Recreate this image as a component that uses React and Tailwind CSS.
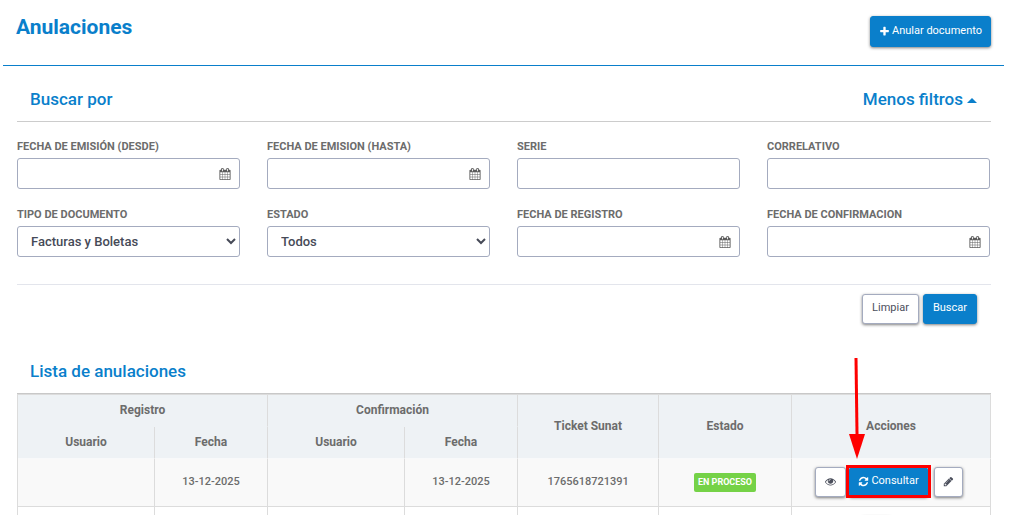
import React from "react";
import clsx from "clsx";

const ICONS = {
  plus: "M1600 736v192q0 40-28 68t-68 28h-416v416q0 40-28 68t-68 28h-192q-40 0-68-28t-28-68v-416h-416q-40 0-68-28t-28-68v-192q0-40 28-68t68-28h416v-416q0-40 28-68t68-28h192q40 0 68 28t28 68v416h416q40 0 68 28t28 68z",
  calendar:
    "M192 1664h288v-288h-288v288zm352 0h320v-288h-320v288zm-352-352h288v-320h-288v320zm352 0h320v-320h-320v320zm-352-384h288v-288h-288v288zm736 736h320v-288h-320v288zm-384-736h320v-288h-320v288zm768 736h288v-288h-288v288zm-384-352h320v-320h-320v320zm-352-864v-288q0-13-9.5-22.5t-22.5-9.5h-64q-13 0-22.5 9.5t-9.5 22.5v288q0 13 9.5 22.5t22.5 9.5h64q13 0 22.5-9.5t9.5-22.5zm736 864h288v-320h-288v320zm-384-384h320v-288h-320v288zm384 0h288v-288h-288v288zm32-480v-288q0-13-9.5-22.5t-22.5-9.5h-64q-13 0-22.5 9.5t-9.5 22.5v288q0 13 9.5 22.5t22.5 9.5h64q13 0 22.5-9.5t9.5-22.5zm384-64v1280q0 52-38 90t-90 38h-1408q-52 0-90-38t-38-90v-1280q0-52 38-90t90-38h128v-96q0-66 47-113t113-47h64q66 0 113 47t47 113v96h384v-96q0-66 47-113t113-47h64q66 0 113 47t47 113v96h128q52 0 90 38t38 90z",
  refresh:
    "M1639 1056q0 5-1 7-64 268-268 434.5t-478 166.5q-146 0-282.5-55t-243.5-157l-129 129q-19 19-45 19t-45-19-19-45v-448q0-26 19-45t45-19h448q26 0 45 19t19 45-19 45l-137 137q71 66 161 102t187 36q134 0 250-65t186-179q11-17 53-117 8-23 30-23h192q13 0 22.5 9.5t9.5 22.5zm25-800v448q0 26-19 45t-45 19h-448q-26 0-45-19t-19-45 19-45l138-138q-148-137-349-137-134 0-250 65t-186 179q-11 17-53 117-8 23-30 23h-199q-13 0-22.5-9.5t-9.5-22.5v-7q65-268 270-434.5t480-166.5q146 0 284 55.5t245 156.5l130-129q19-19 45-19t45 19 19 45z",
  eye: "M1664 960q-152-236-381-353 61 104 61 225 0 185-131.5 316.5t-316.5 131.5-316.5-131.5-131.5-316.5q0-121 61-225-229 117-381 353 133 205 333.5 326.5t434.5 121.5 434.5-121.5 333.5-326.5zm-720-384q0-20-14-34t-34-14q-125 0-214.5 89.5t-89.5 214.5q0 20 14 34t34 14 34-14 14-34q0-86 61-147t147-61q20 0 34-14t14-34zm848 384q0 34-20 69-140 230-376.5 368.5t-499.5 138.5-499.5-139-376.5-368q-20-35-20-69t20-69q140-229 376.5-368t499.5-139 499.5 139 376.5 368q20 35 20 69z",
  pencil:
    "M491 1536l91-91-235-235-91 91v107h128v128h107zm523-928q0-22-22-22-10 0-17 7l-542 542q-7 7-7 17 0 22 22 22 10 0 17-7l542-542q7-7 7-17zm-54-192l416 416-832 832h-416v-416zm683 96q0 53-37 90l-166 166-416-416 166-165q36-38 90-38 53 0 91 38l235 234q37 39 37 91z",
};

const Icon = ({ name, className }) => (
  <svg viewBox="0 0 1792 1792" fill="currentColor" aria-hidden="true" className={clsx("shrink-0", className)}>
    <path d={ICONS[name]} />
  </svg>
);

const Button = ({ variant = "primary", className, children, ...props }) => (
  <button
    type="button"
    className={clsx(
      "inline-flex items-center justify-center rounded-[3px] border pb-px text-[11px] font-normal shadow-[0_1px_3px_rgba(0,0,0,0.5)]",
      variant === "primary" ? "border-[#0a7fcb] bg-[#0a7fcb] text-white" : "border-[#a4abbf] bg-white text-[#4b4f5c]",
      className
    )}
    {...props}
  >
    {children}
  </button>
);

const fields = [
  { id: "emision-desde", label: "FECHA DE EMISIÓN (DESDE)", type: "date" },
  { id: "emision-hasta", label: "FECHA DE EMISION (HASTA)", type: "date" },
  { id: "serie", label: "SERIE", type: "text" },
  { id: "correlativo", label: "CORRELATIVO", type: "text" },
  { id: "tipo", label: "TIPO DE DOCUMENTO", type: "select", options: ["Facturas y Boletas"] },
  { id: "estado", label: "ESTADO", type: "select", options: ["Todos"] },
  { id: "registro", label: "FECHA DE REGISTRO", type: "date" },
  { id: "confirmacion", label: "FECHA DE CONFIRMACION", type: "date" },
];

const control = "h-[31px] w-full rounded-[3px] border border-[#a4abbf] bg-white px-[9px] text-[13px] font-medium text-[#464a57]";

const Field = ({ id, label, type, options }) => (
  <div>
    <label htmlFor={id} className="mb-[3px] block text-[11px] leading-4 font-bold text-[#6c6c6c]">
      {label}
    </label>
    {type === "select" ? (
      <select id={id} className={control}>
        {options.map((option) => (
          <option key={option}>{option}</option>
        ))}
      </select>
    ) : (
      <div className="relative">
        <input id={id} type="text" className={clsx(control, "block")} />
        {type === "date" && (
          <Icon name="calendar" className="pointer-events-none absolute top-[10px] right-[9px] size-3 text-[#5c5c5c]" />
        )}
      </div>
    )}
  </div>
);

const rows = [
  { id: 1, registro: "13-12-2025", confirmacion: "13-12-2025", ticket: "1765618721391", estado: "EN PROCESO" },
];

const th = "border-r border-b border-r-[#dcdcdc] bg-[#eef2f5] pb-0.5 text-xs font-bold";
const thGroup = "border-b-[#eef2f5]";
const thLast = "border-b-[#f8f9fa]";
const td = "border-r border-b border-[#dcdcdc] bg-[#f9f9f9] text-center text-[11px] font-medium";
const tdNext = "border-r border-[#dcdcdc]";

// Marks the action the user has to press
const Pointer = () => (
  <>
    <span className="pointer-events-none absolute -inset-x-[3px] -top-0.5 -bottom-px border-3 border-[#fe0000]" />
    <svg
      viewBox="0 0 18 102"
      fill="#fe0000"
      aria-hidden="true"
      className="pointer-events-none absolute bottom-[38px] -left-px h-[102px] w-[18px]"
    >
      <path d="M6.500 1h3l1 76h-3z" />
      <path d="M1 77h16l-8 25z" />
    </svg>
  </>
);

const App = () => {
  return (
    <div className="h-screen overflow-hidden bg-white pr-1.5 pl-[3px] font-['Roboto',sans-serif] text-[#6c6c6c]">
      <header className="flex items-start justify-between border-b border-[#0a7fcb] pt-4 pr-[13px] pb-[18px] pl-[13px]">
        <h1 className="text-[21px] leading-[22px] font-bold text-[#0a7fcb]">Anulaciones</h1>
        <Button className="h-[31px] gap-0.5 px-2">
          <Icon name="plus" className="size-[11px]" />
          Anular documento
        </Button>
      </header>

      <main className="pr-[13px] pl-3.5">
        <section>
          <div className="flex items-center justify-between border-b border-[#cccccc] pt-[21px] pr-3.5 pb-2.5 pl-[13px] text-[17px] leading-6 font-medium text-[#0a7fcb]">
            <h2>Buscar por</h2>
            <button type="button" className="flex items-center gap-1">
              Menos filtros
              <svg viewBox="0 0 10 5" fill="currentColor" aria-hidden="true" className="mt-0.5 h-[5px] w-2.5">
                <path d="M0 5L5 0l5 5z" />
              </svg>
            </button>
          </div>
          <form>
            <div className="grid grid-cols-4 gap-x-[27px] gap-y-[18px] pt-[17px] pr-px pb-[27px]">
              {fields.map((field) => (
                <Field key={field.id} {...field} />
              ))}
            </div>
            <div className="flex justify-end gap-1 border-t border-[#e3e5ec] pt-[9px] pr-3.5">
              <Button variant="outline" className="h-[30px] px-[9px]">Limpiar</Button>
              <Button className="h-[30px] px-[9px]">Buscar</Button>
            </div>
          </form>
        </section>

        <section className="mt-[35px]">
          <h2 className="px-[13px] text-[17px] leading-6 font-medium text-[#0a7fcb]">Lista de anulaciones</h2>
          <div className="mt-2.5 border-t border-[#c8c8c8]">
            <table className="w-full table-fixed border-separate border-spacing-0 border-t border-l border-[#dcdcdc]">
              <colgroup>
                <col className="w-[137px]" />
                <col className="w-[113px]" />
                <col className="w-[137px]" />
                <col className="w-[113px]" />
                <col className="w-[141px]" />
                <col className="w-[133px]" />
                <col className="w-[199px]" />
              </colgroup>
              <thead>
                <tr className="h-8">
                  <th colSpan={2} className={clsx(th, thGroup)}>Registro</th>
                  <th colSpan={2} className={clsx(th, thGroup)}>Confirmación</th>
                  <th rowSpan={2} className={clsx(th, thLast)}>Ticket Sunat</th>
                  <th rowSpan={2} className={clsx(th, thLast)}>Estado</th>
                  <th rowSpan={2} className={clsx(th, thLast)}>Acciones</th>
                </tr>
                <tr className="h-8">
                  <th className={clsx(th, thLast)}>Usuario</th>
                  <th className={clsx(th, thLast)}>Fecha</th>
                  <th className={clsx(th, thLast)}>Usuario</th>
                  <th className={clsx(th, thLast)}>Fecha</th>
                </tr>
              </thead>
              <tbody>
                {rows.map((row) => (
                  <tr key={row.id} className="h-12">
                    <td className={td}></td>
                    <td className={td}>{row.registro}</td>
                    <td className={td}></td>
                    <td className={td}>{row.confirmacion}</td>
                    <td className={td}>{row.ticket}</td>
                    <td className={td}>
                      <span className="inline-block rounded-xs bg-[#75d247] px-1 text-[9px] leading-[19px] font-bold text-white">
                        {row.estado}
                      </span>
                    </td>
                    <td className={td}>
                      <div className="flex items-center justify-center pr-1 pb-0.5">
                        <Button variant="outline" className="h-[30px] w-[31px]" aria-label="Ver">
                          <Icon name="eye" className="size-[11px]" />
                        </Button>
                        <div className="relative mr-1.5 ml-[3px] flex">
                          <Button className="h-[30px] gap-0.5 px-2">
                            <Icon name="refresh" className="size-[11px]" />
                            Consultar
                          </Button>
                          <Pointer />
                        </div>
                        <Button variant="outline" className="h-[30px] w-[29px]" aria-label="Editar">
                          <Icon name="pencil" className="size-[11px]" />
                        </Button>
                      </div>
                    </td>
                  </tr>
                ))}
                <tr className="h-12">
                  <td className={tdNext}></td>
                  <td className={tdNext}></td>
                  <td className={tdNext}></td>
                  <td className={tdNext}></td>
                  <td className={tdNext}></td>
                  <td className={tdNext}></td>
                  <td className={tdNext}>
                    <div className="flex justify-center pr-[30px]">
                      <Button variant="outline" className="h-[30px] w-[29px]" aria-label="Ver">
                        <Icon name="eye" className="size-[11px]" />
                      </Button>
                    </div>
                  </td>
                </tr>
              </tbody>
            </table>
          </div>
        </section>
      </main>
    </div>
  );
};

export default App;
